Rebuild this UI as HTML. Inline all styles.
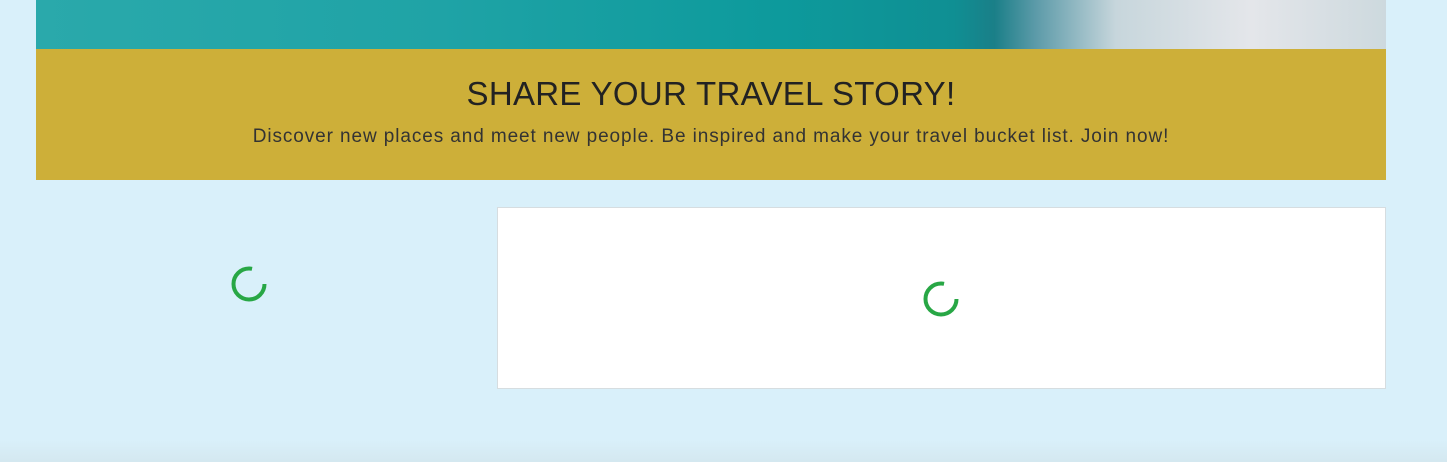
<!DOCTYPE html>
<html><head><style>
body{margin:0;width:1447px;height:462px;background:#d9f0fa;position:relative;overflow:hidden;font-family:"Liberation Sans",sans-serif}
.img{position:absolute;left:36px;top:0;width:1350px;height:49px;background:linear-gradient(90deg,#2aa9ab 0%,#1fa3a6 30%,#0d9a9c 55%,#0f8f93 68%,#1a7f88 71%,#5b9aa8 74%,#c7d6dc 80%,#e4e6ea 90%,#cdd9de 100%)}
.band{position:absolute;left:36px;top:49px;width:1350px;height:131px;background:#cdaf39;text-align:center;color:#222}
.band h1{margin:0;padding-top:25px;font-weight:400;font-size:33px;line-height:40px;letter-spacing:0.3px}
.band p{margin:12px 0 0;font-size:19px;letter-spacing:0.9px;color:#333}
.card{position:absolute;left:497px;top:207px;width:887px;height:180px;background:#fff;border:1px solid #d6dde0}
svg{position:absolute}
.foot{position:absolute;left:0;top:440px;width:1447px;height:22px;background:linear-gradient(#d9f0fa,#d4e8f0)}
</style></head><body>
<div class="img"></div>
<div class="band"><h1>SHARE YOUR TRAVEL STORY!</h1><p>Discover new places and meet new people. Be inspired and make your travel bucket list. Join now!</p></div>
<svg style="left:231px;top:266px" width="36" height="36"><circle cx="18" cy="18" r="15.5" fill="none" stroke="#28a745" stroke-width="4" stroke-dasharray="76 22"/></svg>
<div class="card"></div>
<svg style="left:923px;top:281px" width="36" height="36"><circle cx="18" cy="18" r="15.5" fill="none" stroke="#28a745" stroke-width="4" stroke-dasharray="76 22"/></svg>
<div class="foot"></div>
</body></html>
